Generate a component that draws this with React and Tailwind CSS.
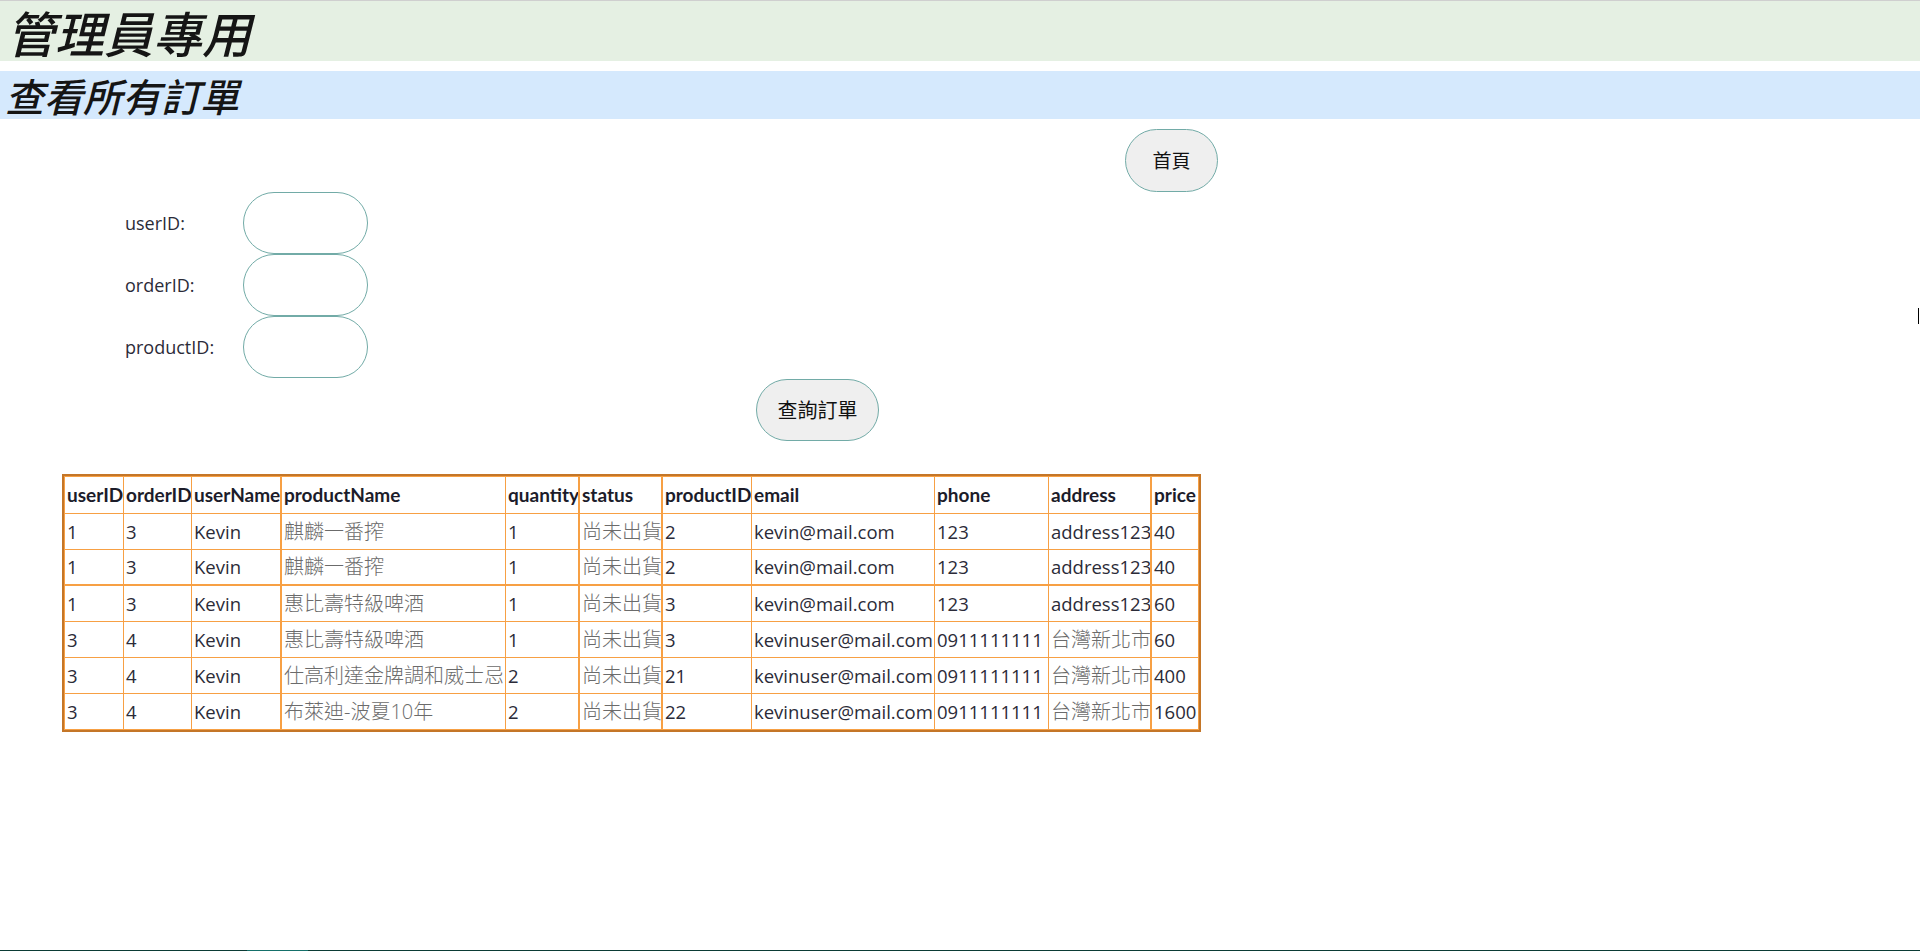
import React from "react";

const cols = [
  { key: "userID", w: "w-[60px]" },
  { key: "orderID", w: "w-[68px]" },
  { key: "userName", w: "w-[90px]", thick: true },
  { key: "productName", w: "w-[224px]" },
  { key: "quantity", w: "w-[74px]", thick: true },
  { key: "status", w: "w-[83px]", thick: true },
  { key: "productID", w: "w-[89px]" },
  { key: "email", w: "w-[183px]" },
  { key: "phone", w: "w-[114px]" },
  { key: "address", w: "w-[103px]", thick: true },
  { key: "price", w: "w-[47px]" },
];

const rows = [
  ["1", "3", "Kevin", "麒麟一番搾", "1", "尚未出貨", "2", "kevin@mail.com", "123", "address123", "40"],
  ["1", "3", "Kevin", "麒麟一番搾", "1", "尚未出貨", "2", "kevin@mail.com", "123", "address123", "40"],
  ["1", "3", "Kevin", "惠比壽特級啤酒", "1", "尚未出貨", "3", "kevin@mail.com", "123", "address123", "60"],
  ["3", "4", "Kevin", "惠比壽特級啤酒", "1", "尚未出貨", "3", "kevinuser@mail.com", "0911111111", "台灣新北市", "60"],
  ["3", "4", "Kevin", "仕高利達金牌調和威士忌", "2", "尚未出貨", "21", "kevinuser@mail.com", "0911111111", "台灣新北市", "400"],
  ["3", "4", "Kevin", "布萊迪-波夏10年", "2", "尚未出貨", "22", "kevinuser@mail.com", "0911111111", "台灣新北市", "1600"],
];

const isCJK = (s) => /[\u4e00-\u9fff]/.test(s);

function Cell({ text, thick, first, rowThick }) {
  const cjk = isCJK(text);
  return (
    <td
      className={
        "p-0 pl-[2px] h-[36px] align-middle whitespace-nowrap overflow-hidden border-[#f7a044] border-b " +
        (rowThick ? "border-b-2 " : "") +
        (thick ? "border-r-2 " : "border-r ") +
        (first ? "border-l " : "") +
        (cjk ? "text-[20px] text-[#6b6b6b] font-light" : "text-[18.5px] text-[#2b2b38]")
      }
    >
      {text}
    </td>
  );
}

export default function App() {
  return (
    <div
      className="relative min-h-[951px] flex flex-col bg-white"
      style={{ fontFamily: '"Open Sans", "Noto Sans CJK TC", sans-serif' }}
    >
      <div className="h-px bg-[#cfcfcf]" />
      <h1
        className="h-[60px] bg-[#e5f0e3] flex items-center italic text-[49px] leading-none pl-[6px] text-[#151515] font-medium"
        style={{ fontFamily: '"Noto Sans CJK TC", sans-serif' }}
      >
        管理員專用
      </h1>
      <h2
        className="mt-[10px] h-[48px] bg-[#d5e9fd] flex items-center italic text-[39px] leading-none pl-[5px] text-[#151515] font-medium"
        style={{ fontFamily: '"Noto Sans CJK TC", sans-serif' }}
      >
        查看所有訂單
      </h2>

      <div className="mt-[10px] pl-[1125px] flex">
        <button
          className="w-[93px] h-[63px] rounded-full bg-[#efefef] border border-[#72aba7] text-[19px] text-[#111]"
          style={{ fontFamily: '"Noto Sans CJK TC", sans-serif' }}
        >
          首頁
        </button>
      </div>

      <div className="flex flex-col">
        {["userID:", "orderID:", "productID:"].map((l) => (
          <div key={l} className="flex items-center h-[62px]">
            <span className="pl-[125px] w-[243px] text-[18px] text-[#2b2b38]">{l}</span>
            <input className="w-[125px] h-[62px] rounded-full border border-[#72aba7] bg-white outline-none" />
          </div>
        ))}
      </div>

      <div className="mt-px pl-[756px] flex">
        <button
          className="w-[123px] h-[62px] rounded-full bg-[#efefef] border border-[#72aba7] text-[20px] text-[#111]"
          style={{ fontFamily: '"Noto Sans CJK TC", sans-serif' }}
        >
          查詢訂單
        </button>
      </div>

      <div className="mt-[33px] pl-[62px] flex">
        <table className="w-[1139px] table-fixed border-separate border-spacing-0 border-2 border-[#c47628]">
          <colgroup>
            {cols.map((c) => (
              <col key={c.key} className={c.w} />
            ))}
          </colgroup>
          <thead>
            <tr>
              {cols.map((c, i) => (
                <th
                  key={c.key}
                  className={
                    "p-0 pl-[2px] h-[38px] text-left align-middle whitespace-nowrap overflow-hidden font-bold text-[19px] text-[#1c1c2a] border-[#f7a044] border-b border-t " +
                    (c.thick ? "border-r-2 " : "border-r ") +
                    (i === 0 ? "border-l" : "")
                  }
                  style={{ fontFamily: 'Lato, "Open Sans", sans-serif' }}
                >
                  {c.key}
                </th>
              ))}
            </tr>
          </thead>
          <tbody>
            {rows.map((r, ri) => (
              <tr key={ri}>
                {r.map((t, ci) => (
                  <Cell
                    key={ci}
                    text={t}
                    thick={cols[ci].thick}
                    first={ci === 0}
                    rowThick={ri === 1}
                  />
                ))}
              </tr>
            ))}
          </tbody>
        </table>
      </div>

      <div className="flex-1" />
      <div className="flex h-px">
        <div className="w-[247px] bg-[#0b3b35]" />
        <div className="w-[61px] bg-[#15706a]" />
        <div className="flex-1 bg-[#0b3b35]" />
      </div>

      <div className="absolute right-[1px] top-[308px] w-px h-[16px] bg-black" />
    </div>
  );
}
